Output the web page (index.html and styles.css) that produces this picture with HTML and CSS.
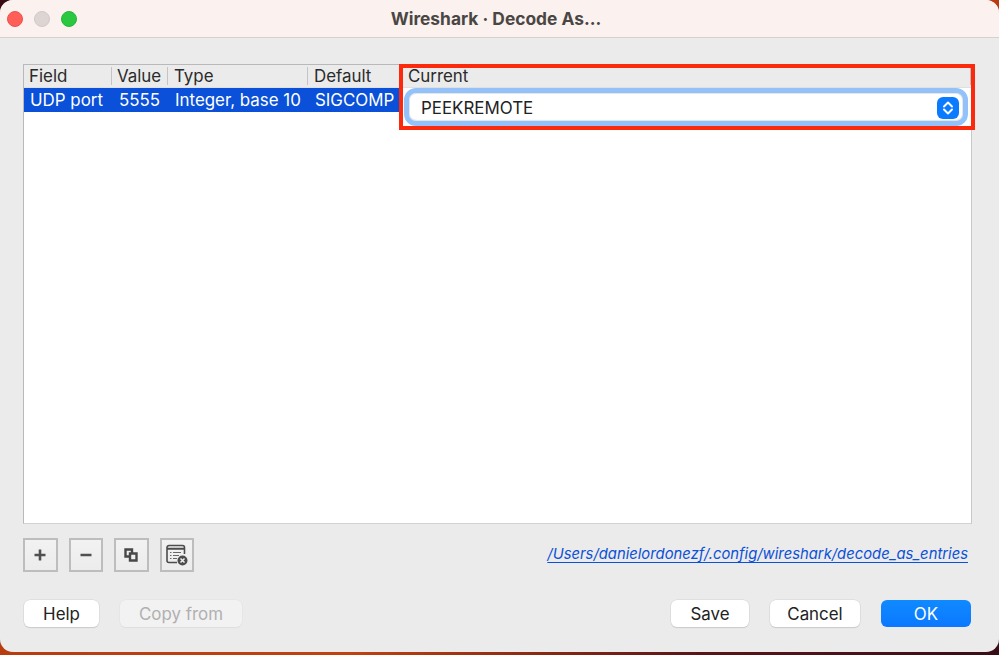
FILE: index.html
```html
<!DOCTYPE html>
<html lang="en">
<head>
<meta charset="utf-8">
<title>Wireshark · Decode As…</title>
<link rel="stylesheet" href="styles.css">
</head>
<body>
<div class="window">
  <header class="titlebar">
    <div class="lights">
      <span class="light red"></span>
      <span class="light grey"></span>
      <span class="light green"></span>
    </div>
    <div class="title">Wireshark · Decode As...</div>
  </header>
  <main class="content">
    <section class="table">
      <div class="head">
        <div class="hcell c-field">Field</div>
        <div class="hcell c-value">Value</div>
        <div class="hcell c-type">Type</div>
        <div class="hcell c-default">Default</div>
        <div class="hcell c-current">Current</div>
      </div>
      <div class="row">
        <div class="cell c-field">UDP port</div>
        <div class="cell c-value">5555</div>
        <div class="cell c-type">Integer, base 10</div>
        <div class="cell c-default">SIGCOMP</div>
        <div class="editor">
          <div class="combo">
            <span>PEEKREMOTE</span>
            <span class="stepper">
              <svg width="14" height="18" viewBox="0 0 14 18"><path d="M3 7.500 7 3.500l4 4M3 10.500l4 4 4-4" fill="none" stroke="#fff" stroke-width="1.900" stroke-linecap="round" stroke-linejoin="round"/></svg>
            </span>
          </div>
        </div>
      </div>
      <div class="highlight"></div>
    </section>
    <section class="tools">
      <div class="toolbtns">
        <button class="tool" aria-label="Add"><svg width="14" height="14" viewBox="0 0 14 14"><path d="M7 1.500v11M1.500 7h11" stroke="#505050" stroke-width="2.600" fill="none"/></svg></button>
        <button class="tool" aria-label="Remove"><svg width="14" height="14" viewBox="0 0 14 14"><path d="M1.500 7h11" stroke="#505050" stroke-width="2.600" fill="none"/></svg></button>
        <button class="tool" aria-label="Copy"><svg width="16" height="16" viewBox="0 0 16 16"><path d="M2.500 2.500h6.500v7H2.500z" fill="none" stroke="#484848" stroke-width="2.400"/><path d="M7 6.500h6.500v7H7z" fill="#efefef" stroke="#484848" stroke-width="2.400"/></svg></button>
        <button class="tool" aria-label="Clear"><svg width="24" height="24" viewBox="0 0 24 24"><path d="M19.500 11V4.500a2 2 0 0 0-2-2H4a2 2 0 0 0-2 2v13a2 2 0 0 0 2 2h8" fill="none" stroke="#4c4c4c" stroke-width="1.600"/><path d="M2 5.800h17.500" stroke="#4c4c4c" stroke-width="2"/><path d="M5 9.500h1.500M8 9.500h8M5 12.500h1.500M8 12.500h6M5 15.500h1.500M8 15.500h4" stroke="#666" stroke-width="1.200"/><circle cx="17.500" cy="17.500" r="5" fill="#4c4c4c"/><path d="m15.500 15.500 4 4m0-4-4 4" stroke="#f0f0f0" stroke-width="1.500"/></svg></button>
      </div>
      <a class="path" href="#">/Users/danielordonezf/.config/wireshark/decode_as_entries</a>
    </section>
    <footer class="actions">
      <div class="group">
        <button class="btn help">Help</button>
        <button class="btn copy" disabled>Copy from</button>
      </div>
      <div class="group right">
        <button class="btn save">Save</button>
        <button class="btn cancel">Cancel</button>
        <button class="btn ok">OK</button>
      </div>
    </footer>
  </main>
</div>
</body>
</html>
```

FILE: styles.css
```css
* { box-sizing: border-box; }
html, body { margin: 0; height: 100%; }
body {
  width: 999px;
  height: 655px;
  overflow: hidden;
  background:
    radial-gradient(circle at 0 0, #3a0d16 18px, transparent 19px),
    radial-gradient(circle at 100% 0, #b83c10 18px, transparent 19px),
    linear-gradient(90deg, #b83c10 0%, #c2410f 35%, #5a1418 70%, #3a0d16 100%);
  font-family: "Inter", "Liberation Sans", sans-serif;
  font-size: 16.900px;
  color: #222;
}
.window {
  height: 652px;
  background: #ebebeb;
  border-radius: 13px;
  display: flex;
  flex-direction: column;
  overflow: hidden;
}
.titlebar {
  height: 38px;
  flex: none;
  display: flex;
  align-items: center;
  justify-content: center;
  position: relative;
  padding-right: 7px;
  background: #fbf1ee;
  border-bottom: 1px solid #d4d1d0;
}
.lights {
  position: absolute;
  left: 7px;
  top: 11px;
  display: flex;
  gap: 11px;
}
.light {
  width: 16px;
  height: 16px;
  border-radius: 50%;
}
.red { background: #ff5f57; border: 1px solid #e9534c; }
.grey { background: #dcd5d3; border: 1px solid #cfc8c6; }
.green { background: #2ac840; border: 1px solid #25b53a; }
.title {
  font-size: 17.350px;
  font-weight: 700;
  color: #4a4644;
}
.content {
  flex: 1;
  display: flex;
  flex-direction: column;
  padding: 26px 27px 26px 23px;
}
.table {
  position: relative;
  height: 460px;
  flex: none;
  background: #fff;
  border: 1px solid #b9b9b9;
  border-bottom-color: #d2d2d2;
  border-right-color: #c8c8c8;
}
.head {
  display: flex;
  height: 23px;
  background: #ebebeb;
  border-bottom: 1px solid #e0e0e0;
  align-items: center;
}
.hcell {
  height: 18px;
  line-height: 18px;
  padding-left: 5px;
  border-right: 1px solid #c4c4c4;
  color: #2a2a2a;
}
.hcell.c-type, .hcell.c-default { padding-left: 6px; }
.hcell.c-current { padding-left: 6px; border-right-color: #bdbdbd; }
.c-field { width: 88px; flex: none; }
.c-value { width: 56px; flex: none; }
.c-type { width: 140px; flex: none; }
.c-default { width: 94px; flex: none; }
.c-current { flex: 1; }
.row {
  display: flex;
  height: 24px;
  background: #0a50d8;
  color: #fff;
}
.cell {
  line-height: 24px;
  padding-left: 6px;
  white-space: nowrap;
}
.cell.c-value, .cell.c-type, .cell.c-default { padding-left: 7px; }
.editor {
  flex: 1;
  height: 41px;
  background: #fff;
  padding: 0 3px 0 2px;
  position: relative;
  z-index: 1;
}
.combo {
  height: 38px;
  padding: 1px 4px 0 12px;
  display: flex;
  align-items: center;
  justify-content: space-between;
  background: #fff;
  border: 5px solid #93c2fb;
  border-radius: 12px;
  box-shadow: inset 0 0 0 1px #e6e6e6, inset 0 -1px 1px #dcdcdc;
  color: #222;
}
.stepper {
  width: 22px;
  height: 22px;
  background: #0a7bff;
  border-radius: 6px;
  display: flex;
  align-items: center;
  justify-content: center;
}
.highlight {
  position: absolute;
  left: 375px;
  top: -1px;
  width: 576px;
  height: 66px;
  border: 4px solid #fb2a0c;
  z-index: 2;
}
.tools {
  display: flex;
  justify-content: space-between;
  align-items: center;
  height: 34px;
  margin-top: 14px;
}
.toolbtns { display: flex; gap: 11px; }
.tool {
  width: 34.500px;
  height: 34px;
  padding: 0;
  display: flex;
  align-items: center;
  justify-content: center;
  background: linear-gradient(#f2f2f2, #ececec);
  border: 2px solid #bdbdbd;
  border-radius: 0;
}
.path {
  color: #0a50d8;
  font-style: italic;
  font-size: 14.820px;
  padding-right: 4px;
  margin-top: -2px;
  text-underline-offset: 2.500px;
  text-decoration-skip-ink: none;
}
.actions {
  display: flex;
  justify-content: space-between;
  margin-top: 28px;
  padding: 0 1px;
}
.group { display: flex; gap: 21px; }
.btn {
  height: 27px;
  padding: 0;
  border: 0;
  border-radius: 6px;
  font: inherit;
  background: #fff;
  color: #222;
  box-shadow: 0 0 0 .5px #d4d4d4, 0 1px 1px #c2c2c2;
}
.help { width: 75px; }
.copy { width: 122px; background: #f2f2f2; color: #b0b0b0; box-shadow: 0 0 0 .5px #e2e2e2, 0 1px 1px #dcdcdc; }
.save { width: 78px; }
.cancel { width: 90px; }
.ok { width: 90px; background: linear-gradient(#108aff, #0a78ff); color: #fff; box-shadow: none; }
```
